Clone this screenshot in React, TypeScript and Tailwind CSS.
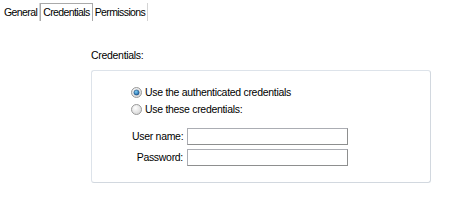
import React from "react";

function Radio({ checked }: { checked: boolean }) {
  return (
    <svg width="11" height="11" viewBox="0 0 11 11" className="shrink-0">
      <defs>
        <radialGradient id={checked ? "rgOn" : "rgOff"} cx="0.4" cy="0.35" r="0.7">
          <stop offset="0" stopColor="#ffffff" />
          <stop offset="1" stopColor="#d4d4d4" />
        </radialGradient>
        <radialGradient id="dot" cx="0.4" cy="0.35" r="0.7">
          <stop offset="0" stopColor="#7fd0f7" />
          <stop offset="1" stopColor="#1a5fa0" />
        </radialGradient>
      </defs>
      <circle cx="5.5" cy="5.5" r="5" fill={`url(#${checked ? "rgOn" : "rgOff"})`} stroke="#9a9a9a" strokeWidth="1" />
      {checked && <circle cx="5.5" cy="5.5" r="2.6" fill="url(#dot)" stroke="#1d4c7a" strokeWidth="0.6" />}
    </svg>
  );
}

export default function App() {
  const tabs = ["General", "Credentials", "Permissions"];
  return (
    <div
      className="h-[212px] w-[455px] bg-white text-[10.5px] leading-none tracking-[-0.3px] text-black"
      style={{ fontFamily: '"Liberation Sans", Arial, sans-serif' }}
    >
      <div className="flex h-[21px] items-end pl-[2px] pt-[3px] tracking-[-0.6px]">
        {tabs.map((t) => {
          const active = t === "Credentials";
          return (
            <div
              key={t}
              className={
                active
                  ? "flex h-[18px] items-center border border-b-0 border-[#a9a9a9] px-[2px]"
                  : "flex h-[18px] items-center border-r border-[#d4d4d4] px-[2px]"
              }
            >
              {t}
            </div>
          );
        })}
      </div>

      <div className="pl-[91px] pt-[29px]">
        <div className="h-[20px]">Credentials:</div>
        <div className="w-[340px] rounded-[3px] border border-[#dde3ea] border-b-[#d2d8df] border-r-[#d2d8df] pb-[16px] pl-[39px] pt-[13px]">
          <label className="flex h-[16px] items-center gap-[3px]">
            <Radio checked />
            <span>Use the authenticated credentials</span>
          </label>
          <label className="mt-[1px] flex h-[16px] items-center gap-[3px]">
            <Radio checked={false} />
            <span>Use these credentials:</span>
          </label>
          <div className="ml-[1px] mt-[11px] grid grid-cols-[51px_161px] items-center gap-x-[4px] gap-y-[4px]">
            <span className="whitespace-nowrap text-right">User name:</span>
            <div className="h-[17px] border border-[#abadb3] border-b-[#8e8f8f] border-r-[#8e8f8f] bg-white" />
            <span className="whitespace-nowrap text-right">Password:</span>
            <div className="h-[17px] border border-[#abadb3] border-b-[#8e8f8f] border-r-[#8e8f8f] bg-white" />
          </div>
        </div>
      </div>
    </div>
  );
}
